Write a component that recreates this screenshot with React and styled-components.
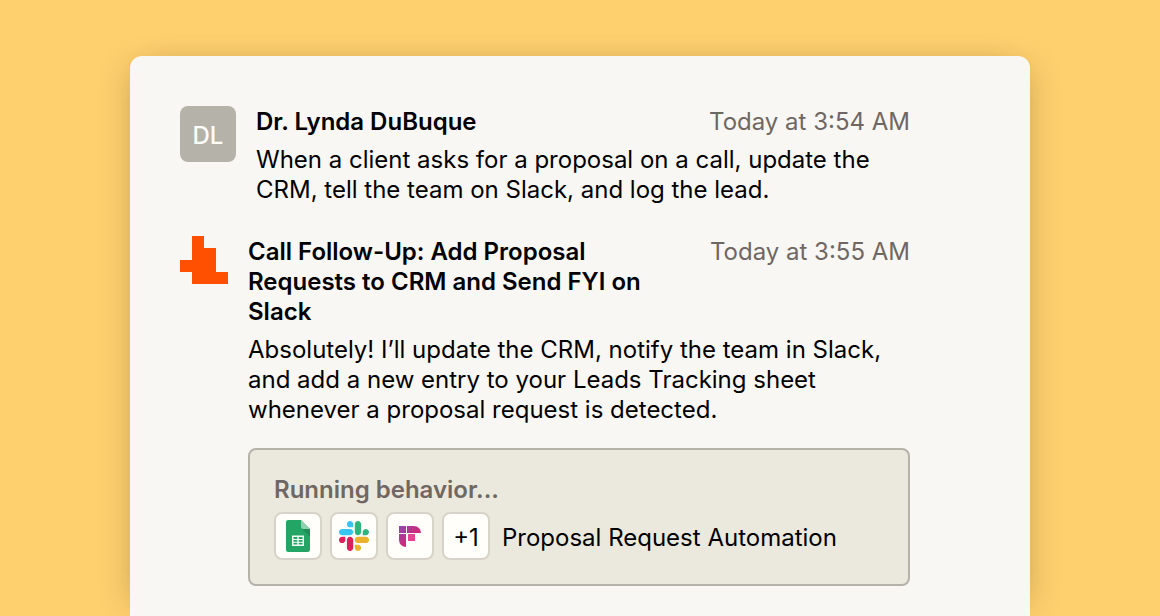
// src/App.jsx
import React from 'react';
import styled, { createGlobalStyle } from 'styled-components';

const GlobalStyle = createGlobalStyle`
  * {
    box-sizing: border-box;
  }

  body {
    margin: 0;
    background: #ffd06e;
    color: #000;
    font-family: Inter, 'Liberation Sans', sans-serif;
    font-size: 24px;
    line-height: 30px;
  }

  p, h2, h3, ul {
    margin: 0;
    padding: 0;
  }
`;

const Page = styled.div`
  min-height: 100vh;
  padding: 56px 24px 0;
  display: flex;
  justify-content: center;
`;

const Card = styled.main`
  width: 100%;
  max-width: 900px;
  padding: 50px 120px 30px 50px;
  background: #f8f7f4;
  border-radius: 12px 12px 0 0;
  /* one shadow per side, pulled in so it fades out at the top and bottom */
  box-shadow:
    -12px 0 32px -12px rgba(0, 0, 0, 0.18),
    12px 0 32px -12px rgba(0, 0, 0, 0.18);
  display: flex;
  flex-direction: column;
  gap: 31px;
`;

const Message = styled.article`
  display: flex;
  align-items: flex-start;
  gap: 20px;
`;

const Avatar = styled.div`
  flex: none;
  width: 56px;
  height: 56px;
  padding-top: 4px;
  border-radius: 8px;
  background: #b5b2aa;
  color: #fffdf9;
  font-weight: 500;
  display: flex;
  align-items: center;
  justify-content: center;
`;

const AgentLogo = styled.svg`
  flex: none;
  width: 48px;
  height: 48px;
`;

const Content = styled.div`
  flex: 1;
  min-width: 0;
  padding-top: 1px;
  display: flex;
  flex-direction: column;
  gap: 8px;
`;

const Header = styled.header`
  display: flex;
  justify-content: space-between;
  gap: 20px;
`;

const Sender = styled.h2`
  font-size: 24px;
  font-weight: 600;
`;

const Time = styled.time`
  flex: none;
  color: #6f6763;
`;

const Behavior = styled.section`
  margin-top: 15px;
  padding: 25px 24px 24px;
  border: 2px solid #b5b2aa;
  border-radius: 8px;
  background: #ebe9dd;
  display: flex;
  flex-direction: column;
  gap: 7px;
`;

const Status = styled.h3`
  color: #6f6763;
  font-size: 24px;
  font-weight: 600;
`;

const BehaviorRow = styled.div`
  display: flex;
  align-items: center;
  gap: 12px;
`;

const AppList = styled.ul`
  display: flex;
  gap: 8px;
  list-style: none;
`;

const AppChip = styled.li`
  width: 48px;
  height: 48px;
  border: 2px solid #d7d3c9;
  border-radius: 8px;
  background: #fffefb;
  display: flex;
  align-items: center;
  justify-content: center;
`;

const Label = styled.span`
  padding-top: 4px;
  display: block;
`;

const SheetsIcon = () => (
  <svg width="32" height="32" viewBox="0 0 32 32" role="img" aria-label="Google Sheets">
    <path d="M6.2 0H19l9 9v20.8a2.2 2.2 0 0 1-2.2 2.2H6.2A2.2 2.2 0 0 1 4 29.8V2.2A2.2 2.2 0 0 1 6.2 0Z" fill="#23a566" />
    <path d="M19.5 8.4 28 16.8V9Z" fill="#1c8f57" />
    <path d="M19 0l9 9h-6.8A2.2 2.2 0 0 1 19 6.8Z" fill="#8ed1b1" />
    <path
      fillRule="evenodd"
      d="M10 15.500h12v10.500H10ZM11.500 17v1.900h3.800V17ZM16.700 17v1.900h3.800V17ZM11.500 20v1.700h3.800V20ZM16.700 20v1.700h3.800V20ZM11.500 22.800v1.700h3.800v-1.700ZM16.700 22.800v1.700h3.800v-1.700Z"
      fill="#f4fbf5"
    />
  </svg>
);

const SlackIcon = () => (
  <svg width="30" height="30" viewBox="0 0 122.8 122.8" role="img" aria-label="Slack">
    <path d="M25.8 77.6c0 7.1-5.8 12.9-12.9 12.9S0 84.7 0 77.6s5.8-12.9 12.9-12.9h12.9v12.9zm6.5 0c0-7.1 5.8-12.9 12.9-12.9s12.9 5.8 12.9 12.9v32.3c0 7.1-5.8 12.9-12.9 12.9s-12.9-5.8-12.9-12.9V77.6z" fill="#e01e5a" />
    <path d="M45.2 25.8c-7.1 0-12.9-5.8-12.9-12.9S38.1 0 45.2 0s12.9 5.8 12.9 12.9v12.9H45.2zm0 6.5c7.1 0 12.9 5.8 12.9 12.9s-5.8 12.9-12.9 12.9H12.9C5.8 58.1 0 52.3 0 45.2s5.8-12.9 12.9-12.9h32.3z" fill="#36c5f0" />
    <path d="M97 45.2c0-7.1 5.8-12.9 12.9-12.9s12.9 5.8 12.9 12.9-5.8 12.9-12.9 12.9H97V45.2zm-6.5 0c0 7.1-5.8 12.9-12.9 12.9s-12.9-5.8-12.9-12.9V12.9C64.7 5.8 70.5 0 77.6 0s12.9 5.8 12.9 12.9v32.3z" fill="#2eb67d" />
    <path d="M77.6 97c7.1 0 12.9 5.8 12.9 12.9s-5.8 12.9-12.9 12.9-12.9-5.8-12.9-12.9V97h12.9zm0-6.5c-7.1 0-12.9-5.8-12.9-12.9s5.8-12.9 12.9-12.9h32.3c7.1 0 12.9 5.8 12.9 12.9s-5.8 12.9-12.9 12.9H77.6z" fill="#ecb22e" />
  </svg>
);

const FirefliesIcon = () => (
  <svg width="22" height="22" viewBox="0 0 22 22" role="img" aria-label="Fireflies">
    <defs>
      <linearGradient id="ff-dark" gradientUnits="userSpaceOnUse" x1="0" y1="0" x2="20" y2="20">
        <stop offset="0" stopColor="#8c4bb2" />
        <stop offset="0.55" stopColor="#c92c80" />
        <stop offset="1" stopColor="#d92b70" />
      </linearGradient>
      <linearGradient id="ff-light" x1="0" y1="0" x2="1" y2="1">
        <stop offset="0" stopColor="#e14a97" />
        <stop offset="1" stopColor="#f0388a" />
      </linearGradient>
    </defs>
    <path d="M0 1h7v7H0Z" fill="url(#ff-dark)" />
    <path d="M8 1h7a7 7 0 0 1 7 7H8Z" fill="url(#ff-dark)" />
    <path d="M0 9h7v13a7 7 0 0 1-7-7Z" fill="url(#ff-dark)" />
    <path d="M9 9h7v7H9Z" fill="url(#ff-light)" />
  </svg>
);

const App = () => {
  return (
    <>
      <GlobalStyle />
      <Page>
        <Card>
          <Message>
            <Avatar>DL</Avatar>
            <Content>
              <Header>
                <Sender>Dr. Lynda DuBuque</Sender>
                <Time>Today at 3:54 AM</Time>
              </Header>
              <p>
                When a client asks for a proposal on a call, update the CRM, tell the team on
                Slack, and log the lead.
              </p>
            </Content>
          </Message>
          <Message>
            <AgentLogo viewBox="0 0 48 48" aria-hidden="true">
              <path d="M12 0h12v12h12v24h12v12H12V36H0V24h12Z" fill="#ff4f00" />
            </AgentLogo>
            <Content>
              <Header>
                <Sender>Call Follow-Up: Add Proposal Requests to CRM and Send FYI on Slack</Sender>
                <Time>Today at 3:55 AM</Time>
              </Header>
              <p>
                Absolutely! I’ll update the CRM, notify the team in Slack, and add a new entry to
                your Leads Tracking sheet whenever a proposal request is detected.
              </p>
              <Behavior>
                <Status>Running behavior...</Status>
                <BehaviorRow>
                  <AppList>
                    <AppChip><SheetsIcon /></AppChip>
                    <AppChip><SlackIcon /></AppChip>
                    <AppChip><FirefliesIcon /></AppChip>
                    <AppChip><Label>+1</Label></AppChip>
                  </AppList>
                  <Label>Proposal Request Automation</Label>
                </BehaviorRow>
              </Behavior>
            </Content>
          </Message>
        </Card>
      </Page>
    </>
  );
};

export default App;
